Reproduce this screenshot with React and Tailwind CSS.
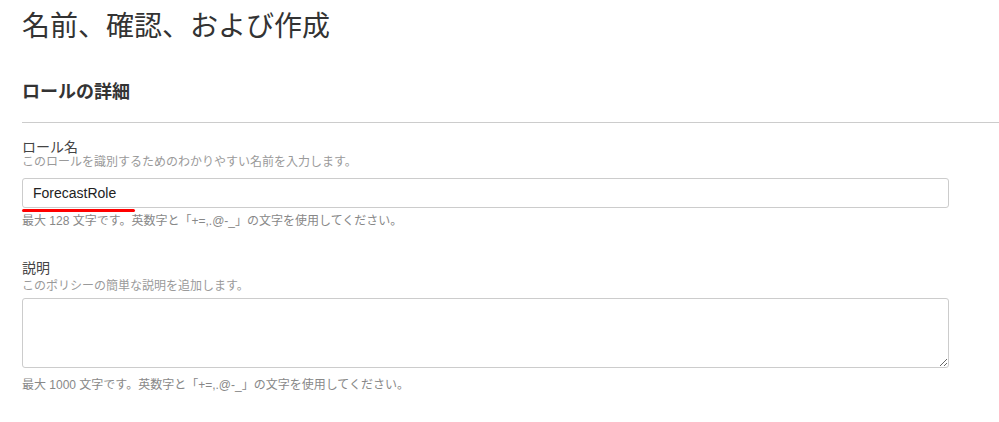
import React from "react";

const font = "font-['Liberation_Sans','Noto_Sans_CJK_JP',sans-serif]";

function Field({ label, help, hint, helpGap = "mt-0", children }) {
  return (
    <div>
      <p className="text-[14px] leading-[16px] text-[#444]">{label}</p>
      <p className={`${helpGap} text-[12px] leading-[14px] text-[#9a9a9a]`}>{help}</p>
      {children}
      <p className="text-[12px] leading-[14px] text-[#888]">{hint}</p>
    </div>
  );
}

export default function App() {
  return (
    <div className={`${font} min-h-screen bg-white pt-[7px] pl-[22px]`}>
      <h1 className="text-[28px] leading-[40px] font-normal text-[#333]">名前、確認、および作成</h1>
      <h2 className="mt-[33px] text-[18px] leading-[24px] font-bold text-[#333]">ロールの詳細</h2>
      <hr className="mt-[18px] border-0 border-t border-[#ccc]" />

      <div className="mt-[16px]">
        <Field
          label="ロール名"
          help="このロールを識別するためのわかりやすい名前を入力します。"
          hint="最大 128 文字です。英数字と「+=,.@-_」の文字を使用してください。"
        >
          <input
            defaultValue="ForecastRole"
            className="mt-[9px] block h-[30px] w-[927px] rounded-[3px] border border-[#ccc] px-[10px] text-[14px] text-[#222] outline-none"
          />
          <div className="mt-[1px] h-[3px] w-[113px] rounded-[2px] bg-[#f00]" />
          <div className="h-[2px]" />
        </Field>
      </div>

      <div className="mt-[32px]">
        <Field
          label="説明"
          helpGap="mt-[3px]"
          help="このポリシーの簡単な説明を追加します。"
          hint="最大 1000 文字です。英数字と「+=,.@-_」の文字を使用してください。"
        >
          <textarea className="mt-[5px] mb-[10px] block h-[70px] w-[927px] rounded-[3px] border border-[#ccc] px-[10px] py-[6px] text-[14px] outline-none" />
        </Field>
      </div>
    </div>
  );
}
